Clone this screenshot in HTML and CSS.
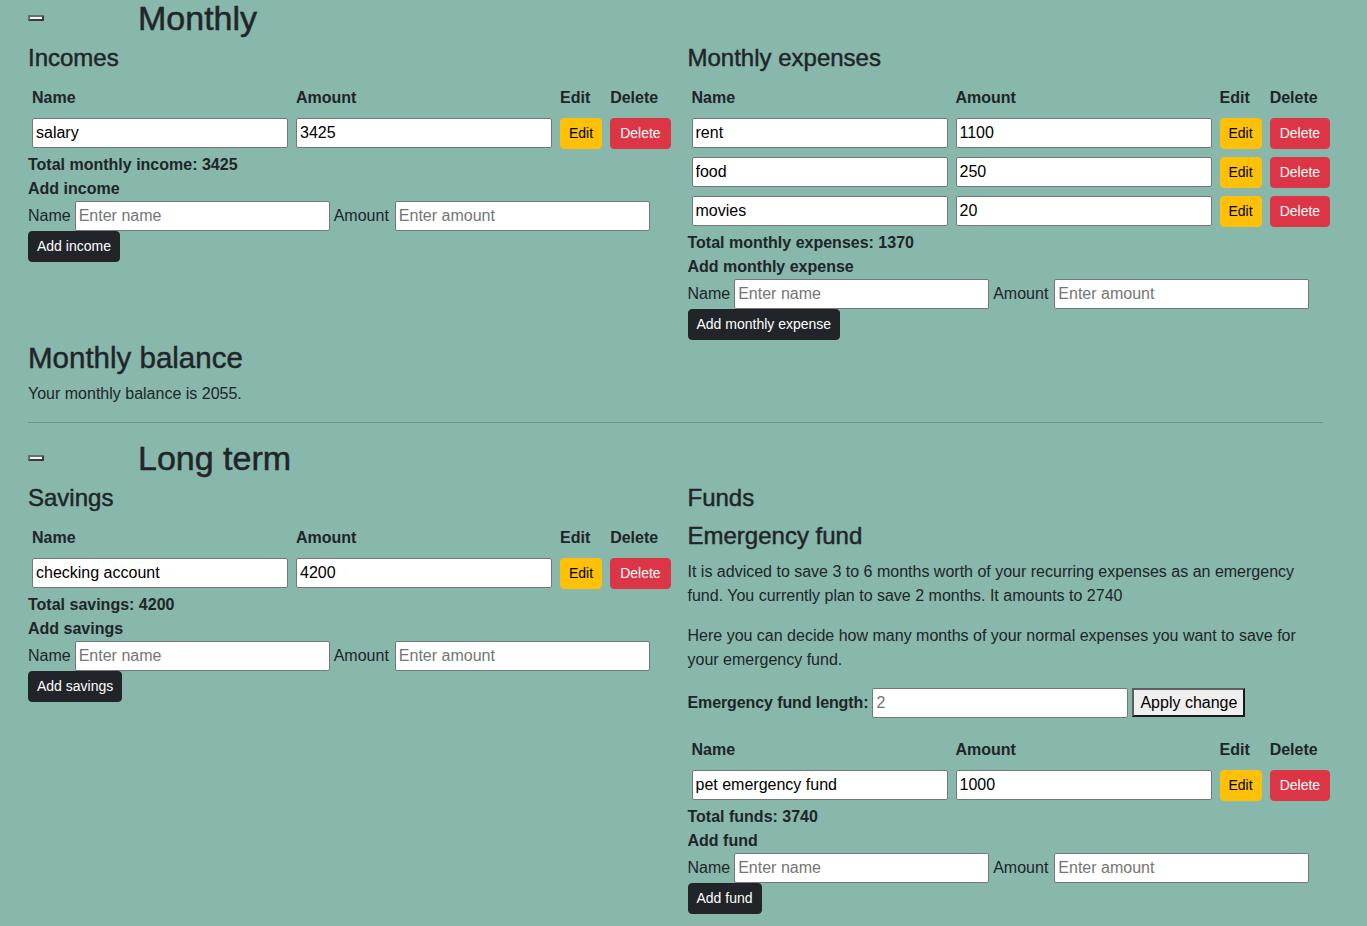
FILE: index.html
```html
<!DOCTYPE html>
<html lang="en">
<head>
<meta charset="utf-8">
<title>Budget</title>
<link rel="stylesheet" href="styles.css">
</head>
<body>
<div class="container">
  <section class="block">
    <div class="block-head">
      <button class="toggle" type="button" aria-label="Collapse"></button>
      <h2 class="block-title">Monthly</h2>
    </div>
    <div class="cols">
      <div class="col">
        <h4 class="sub">Incomes</h4>
        <table class="items">
          <thead>
            <tr><th>Name</th><th>Amount</th><th>Edit</th><th>Delete</th></tr>
          </thead>
          <tbody>
            <tr>
              <td><input class="field" type="text" value="salary"></td>
              <td><input class="field" type="text" value="3425"></td>
              <td><button class="btn btn-edit" type="button">Edit</button></td>
              <td><button class="btn btn-delete" type="button">Delete</button></td>
            </tr>
          </tbody>
        </table>
        <div class="strong-line">Total monthly income: 3425</div>
        <div class="strong-line">Add income</div>
        <div class="add-row">
          <span>Name</span><input class="field" type="text" placeholder="Enter name">
          <span class="gap-label">Amount</span><input class="field" type="text" placeholder="Enter amount">
        </div>
        <button class="btn btn-dark" type="button">Add income</button>
      </div>
      <div class="col">
        <h4 class="sub">Monthly expenses</h4>
        <table class="items">
          <thead>
            <tr><th>Name</th><th>Amount</th><th>Edit</th><th>Delete</th></tr>
          </thead>
          <tbody>
            <tr>
              <td><input class="field" type="text" value="rent"></td>
              <td><input class="field" type="text" value="1100"></td>
              <td><button class="btn btn-edit" type="button">Edit</button></td>
              <td><button class="btn btn-delete" type="button">Delete</button></td>
            </tr>
            <tr>
              <td><input class="field" type="text" value="food"></td>
              <td><input class="field" type="text" value="250"></td>
              <td><button class="btn btn-edit" type="button">Edit</button></td>
              <td><button class="btn btn-delete" type="button">Delete</button></td>
            </tr>
            <tr>
              <td><input class="field" type="text" value="movies"></td>
              <td><input class="field" type="text" value="20"></td>
              <td><button class="btn btn-edit" type="button">Edit</button></td>
              <td><button class="btn btn-delete" type="button">Delete</button></td>
            </tr>
          </tbody>
        </table>
        <div class="strong-line">Total monthly expenses: 1370</div>
        <div class="strong-line">Add monthly expense</div>
        <div class="add-row">
          <span>Name</span><input class="field" type="text" placeholder="Enter name">
          <span class="gap-label">Amount</span><input class="field" type="text" placeholder="Enter amount">
        </div>
        <button class="btn btn-dark" type="button">Add monthly expense</button>
      </div>
    </div>
    <h3 class="balance-title">Monthly balance</h3>
    <p class="text">Your monthly balance is 2055.</p>
  </section>

  <hr class="divider">

  <section class="block">
    <div class="block-head">
      <button class="toggle" type="button" aria-label="Collapse"></button>
      <h2 class="block-title">Long term</h2>
    </div>
    <div class="cols">
      <div class="col">
        <h4 class="sub">Savings</h4>
        <table class="items">
          <thead>
            <tr><th>Name</th><th>Amount</th><th>Edit</th><th>Delete</th></tr>
          </thead>
          <tbody>
            <tr>
              <td><input class="field" type="text" value="checking account"></td>
              <td><input class="field" type="text" value="4200"></td>
              <td><button class="btn btn-edit" type="button">Edit</button></td>
              <td><button class="btn btn-delete" type="button">Delete</button></td>
            </tr>
          </tbody>
        </table>
        <div class="strong-line">Total savings: 4200</div>
        <div class="strong-line">Add savings</div>
        <div class="add-row">
          <span>Name</span><input class="field" type="text" placeholder="Enter name">
          <span class="gap-label">Amount</span><input class="field" type="text" placeholder="Enter amount">
        </div>
        <button class="btn btn-dark" type="button">Add savings</button>
      </div>
      <div class="col">
        <h4 class="sub">Funds</h4>
        <h4 class="sub">Emergency fund</h4>
        <p class="text">It is adviced to save 3 to 6 months worth of your recurring expenses as an emergency fund. You currently plan to save 2 months. It amounts to 2740</p>
        <p class="text">Here you can decide how many months of your normal expenses you want to save for your emergency fund.</p>
        <div class="length-row">
          <strong>Emergency fund length:</strong>
          <input class="field" type="text" placeholder="2">
          <button class="apply" type="button">Apply change</button>
        </div>
        <table class="items">
          <thead>
            <tr><th>Name</th><th>Amount</th><th>Edit</th><th>Delete</th></tr>
          </thead>
          <tbody>
            <tr>
              <td><input class="field" type="text" value="pet emergency fund"></td>
              <td><input class="field" type="text" value="1000"></td>
              <td><button class="btn btn-edit" type="button">Edit</button></td>
              <td><button class="btn btn-delete" type="button">Delete</button></td>
            </tr>
          </tbody>
        </table>
        <div class="strong-line">Total funds: 3740</div>
        <div class="strong-line">Add fund</div>
        <div class="add-row">
          <span>Name</span><input class="field" type="text" placeholder="Enter name">
          <span class="gap-label">Amount</span><input class="field" type="text" placeholder="Enter amount">
        </div>
        <button class="btn btn-dark" type="button">Add fund</button>
      </div>
    </div>
  </section>
</div>
</body>
</html>
```
FILE: styles.css
```css
* {
  box-sizing: border-box;
}

html, body {
  margin: 0;
  padding: 0;
}

body {
  background: #88b7ab;
  color: #212529;
  font-family: "Liberation Sans", Arial, sans-serif;
  font-size: 16px;
  line-height: 1.5;
  min-height: 926px;
}

.container {
  width: 1295px;
  margin-left: 28px;
}

.block-head {
  display: flex;
  align-items: center;
  height: 36px;
  margin-bottom: 8px;
}

.toggle {
  display: block;
  width: 16px;
  height: 6px;
  padding: 0;
  margin: 0;
  background: #f4f4f4;
  border: 2px solid;
  border-color: #6b6b6b #3a3a3a #3a3a3a #6b6b6b;
  border-radius: 1px;
  flex: none;
}

.block-title {
  margin: 0 0 0 94px;
  font-size: 34px;
  font-weight: 400;
  line-height: 36px;
  -webkit-text-stroke: 0.5px #212529;
}

.cols {
  display: grid;
  grid-template-columns: 1fr 1fr;
  column-gap: 24px;
}

.col {
  min-width: 0;
}

.sub {
  margin: 0 0 9px;
  font-size: 24px;
  font-weight: 400;
  line-height: 1.2;
  -webkit-text-stroke: 0.45px #212529;
}

.balance-title {
  margin: 0 0 7px;
  font-size: 29.5px;
  font-weight: 400;
  line-height: 1.2;
  -webkit-text-stroke: 0.45px #212529;
}

.text {
  margin: 0 0 16px;
}

.divider {
  margin: 0 0 17px;
  border: 0;
  border-top: 1px solid #6f928a;
  height: 0;
}

.items {
  border-collapse: collapse;
}

.items th,
.items td {
  padding: 4px;
  text-align: left;
  vertical-align: middle;
}

.items th {
  font-weight: 700;
  line-height: 24px;
}

.field {
  width: 256px;
  height: 30px;
  padding: 0 3px;
  margin: 0;
  border: 1px solid #767676;
  border-radius: 2px;
  background: #fff;
  font-family: "Liberation Sans", Arial, sans-serif;
  font-size: 16px;
  color: #000;
  vertical-align: middle;
}

.field::placeholder {
  color: #757575;
}

.btn {
  display: inline-block;
  padding: 4px 8px;
  margin: 0;
  font-family: "Liberation Sans", Arial, sans-serif;
  font-size: 14px;
  line-height: 1.5;
  border: 1px solid transparent;
  border-radius: 4px;
  vertical-align: middle;
  cursor: pointer;
}

.btn-edit {
  background: #ffc107;
  border-color: #ffc107;
  color: #000;
}

.btn-delete {
  background: #dc3545;
  border-color: #dc3545;
  color: #fff;
  padding: 4px 9px;
}

.btn-dark {
  background: #212529;
  border-color: #212529;
  color: #fff;
  display: block;
}

.strong-line {
  font-weight: 700;
  line-height: 24px;
}

.add-row {
  display: flex;
  align-items: center;
  gap: 4px;
  height: 30px;
}

.add-row .field {
  width: 255px;
}

.gap-label {
  padding-right: 2px;
}

.length-row {
  display: flex;
  align-items: center;
  gap: 4px;
  height: 30px;
  margin-bottom: 16px;
}

.length-row strong {
  font-weight: 700;
  letter-spacing: -0.1px;
}

.apply {
  height: 29px;
  padding: 0 6px;
  margin: 0;
  background: #efefef;
  border: 2px solid;
  border-color: #5e5e5e #1a1a1a #1a1a1a #5e5e5e;
  font-family: "Liberation Sans", Arial, sans-serif;
  font-size: 16px;
  color: #000;
}
```
